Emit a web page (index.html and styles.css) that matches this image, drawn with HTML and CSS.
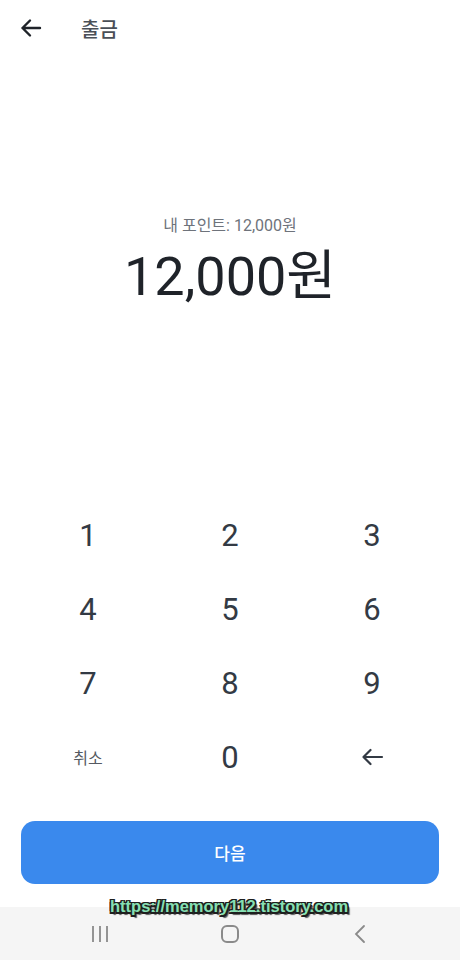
FILE: index.html
```html
<!DOCTYPE html>
<html lang="ko">
<head>
  <meta charset="UTF-8">
  <meta name="viewport" content="width=device-width, initial-scale=1">
  <title>출금</title>
  <link rel="stylesheet" href="styles.css">
</head>
<body>
  <div class="screen">
    <header class="topbar">
      <button class="icon-btn" aria-label="뒤로">
        <svg width="24" height="24" viewBox="0 0 24 24" fill="none" stroke="#1f2329" stroke-width="2.4" stroke-linecap="round" stroke-linejoin="round">
          <path d="M21 12H3.5M11 4.5L3.5 12l7.5 7.5"/>
        </svg>
      </button>
      <h1 class="title">출금</h1>
    </header>

    <section class="amount">
      <p class="balance">내 포인트: 12,000원</p>
      <p class="value">12,000원</p>
    </section>

    <div class="keypad">
      <button class="key">1</button>
      <button class="key">2</button>
      <button class="key">3</button>
      <button class="key">4</button>
      <button class="key">5</button>
      <button class="key">6</button>
      <button class="key">7</button>
      <button class="key">8</button>
      <button class="key">9</button>
      <button class="key key-text">취소</button>
      <button class="key">0</button>
      <button class="key" aria-label="지우기">
        <svg width="24" height="24" viewBox="0 0 24 24" fill="none" stroke="#333a44" stroke-width="2.2" stroke-linecap="round" stroke-linejoin="round">
          <path d="M22 12H3.5M10.5 5L3.5 12l7 7"/>
        </svg>
      </button>
    </div>

    <div class="footer">
      <button class="btn">다음</button>
    </div>

    <nav class="navbar">
      <svg class="nav-recent" width="18" height="18" viewBox="0 0 18 18" fill="none" stroke="#8a8a8a" stroke-width="1.8">
        <path d="M2 1v16M9 1v16M16 1v16"/>
      </svg>
      <svg width="20" height="20" viewBox="0 0 20 20" fill="none" stroke="#8a8a8a" stroke-width="2">
        <rect x="2" y="2" width="16" height="16" rx="5"/>
      </svg>
      <svg class="nav-back" width="14" height="20" viewBox="0 0 14 20" fill="none" stroke="#8a8a8a" stroke-width="1.8" stroke-linecap="round">
        <path d="M11 2L3 10l8 8"/>
      </svg>
      <span class="watermark">https://memory112.tistory.com</span>
    </nav>
  </div>
</body>
</html>
```

FILE: styles.css
```css
* {
  box-sizing: border-box;
}
body {
  margin: 0;
  background: #fff;
  font-family: Roboto, "Noto Sans CJK KR", sans-serif;
  color: #1f2329;
}
button {
  font-family: inherit;
  background: none;
  border: none;
  padding: 0;
  cursor: pointer;
}
.screen {
  width: 460px;
  height: 960px;
  display: flex;
  flex-direction: column;
}
.topbar {
  height: 56px;
  display: flex;
  align-items: center;
  padding-left: 19px;
}
.icon-btn {
  width: 24px;
  height: 24px;
  display: flex;
}
.title {
  margin: 0 0 0 38px;
  font-size: 20px;
  font-weight: 500;
  color: #4a4f57;
}
.amount {
  margin-top: 157px;
  text-align: center;
}
.balance {
  margin: 0;
  font-size: 16px;
  line-height: 26px;
  color: #6e737b;
}
.value {
  margin: 6px 0 0;
  font-size: 54px;
  line-height: 64px;
  color: #1f2329;
}
.keypad {
  margin-top: 189px;
  padding: 0 17px;
  display: grid;
  grid-template-columns: repeat(3, 1fr);
  grid-auto-rows: 74px;
}
.key {
  display: flex;
  align-items: center;
  justify-content: center;
  font-size: 31px;
  color: #333a44;
}
.key-text {
  font-size: 16px;
  color: #555a62;
}
.footer {
  padding: 27px 21px 0;
}
.btn {
  width: 100%;
  height: 63px;
  border-radius: 14px;
  background: #3a89ed;
  color: #fff;
  font-size: 17px;
  font-weight: 500;
}
.navbar {
  position: relative;
  margin-top: auto;
  height: 53px;
  background: #f5f5f5;
  display: grid;
  grid-template-columns: repeat(3, 1fr);
  justify-items: center;
  align-items: center;
}
.nav-recent {
  justify-self: start;
  margin-left: 91px;
}
.nav-back {
  justify-self: end;
  margin-right: 93px;
}
.watermark {
  position: absolute;
  left: 110px;
  top: -10px;
  font-family: "Liberation Sans", sans-serif;
  font-weight: bold;
  font-size: 16.5px;
  color: #86e0b4;
  text-shadow: -1.5px -1.5px 0 #1e1e1e, 1.5px -1.5px 0 #1e1e1e, -1.5px 1.5px 0 #1e1e1e, 1.5px 1.5px 0 #1e1e1e, 0 -1.5px 0 #1e1e1e, 0 1.5px 0 #1e1e1e, 2.5px 2.5px 1px #555;
}
```
